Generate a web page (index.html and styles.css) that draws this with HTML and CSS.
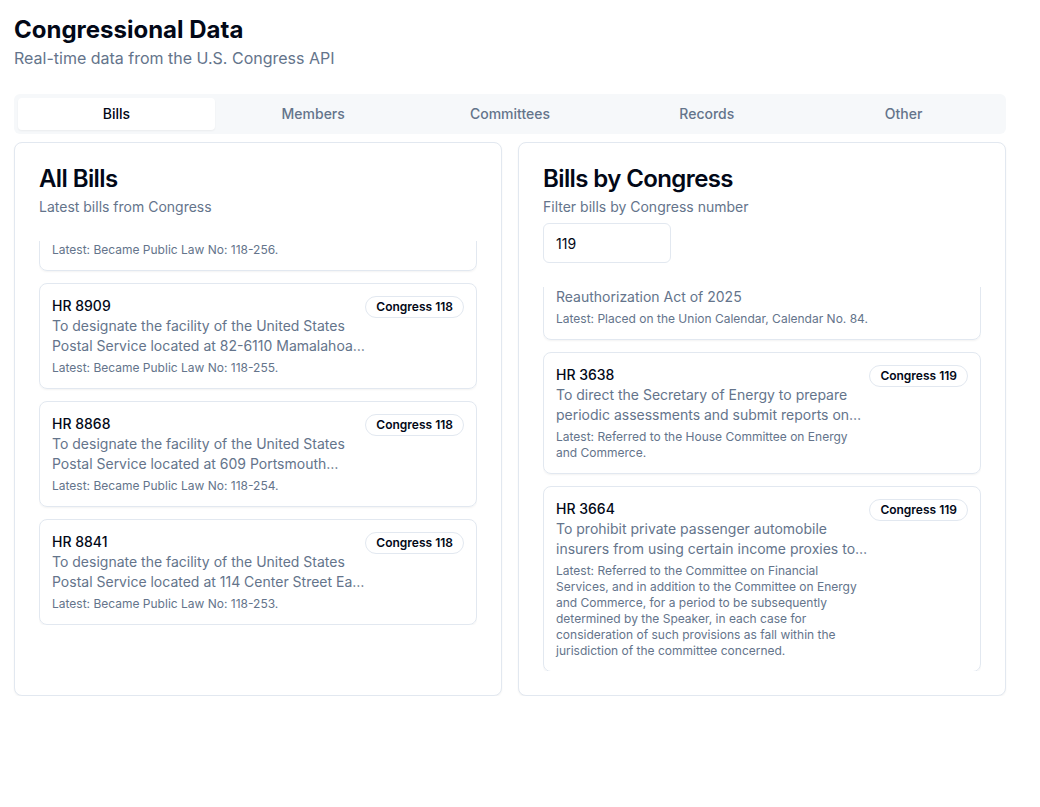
FILE: index.html
```html
<!DOCTYPE html>
<html lang="en">
<head>
<meta charset="utf-8">
<title>Congressional Data</title>
<link rel="stylesheet" href="styles.css">
</head>
<body>
<main class="page">
  <header class="page-header">
    <h1 class="page-title">Congressional Data</h1>
    <p class="page-sub">Real-time data from the U.S. Congress API</p>
  </header>

  <nav class="tabs">
    <div class="tab active">Bills</div>
    <div class="tab">Members</div>
    <div class="tab">Committees</div>
    <div class="tab">Records</div>
    <div class="tab">Other</div>
  </nav>

  <section class="grid">
    <div class="card">
      <div class="card-header">
        <h2 class="card-title">All Bills</h2>
        <p class="card-desc">Latest bills from Congress</p>
      </div>
      <div class="card-content">
        <div class="scroll scroll-bottom">
          <div class="list">
            <div class="bill">
              <div class="bill-main">
                <div class="bill-id">HR 8923</div>
                <div class="bill-title">To designate the facility of the United States Postal Service located at 5 Main Street in Hilo, Hawaii</div>
                <div class="bill-latest">Latest: Became Public Law No: 118-256.</div>
              </div>
              <span class="badge">Congress 118</span>
            </div>
            <div class="bill">
              <div class="bill-main">
                <div class="bill-id">HR 8909</div>
                <div class="bill-title">To designate the facility of the United States Postal Service located at 82-6110 Mamalahoa Highway in Captain Cook, Hawaii</div>
                <div class="bill-latest">Latest: Became Public Law No: 118-255.</div>
              </div>
              <span class="badge">Congress 118</span>
            </div>
            <div class="bill">
              <div class="bill-main">
                <div class="bill-id">HR 8868</div>
                <div class="bill-title">To designate the facility of the United States Postal Service located at 609 Portsmouth Avenue in Greenland, New Hampshire</div>
                <div class="bill-latest">Latest: Became Public Law No: 118-254.</div>
              </div>
              <span class="badge">Congress 118</span>
            </div>
            <div class="bill">
              <div class="bill-main">
                <div class="bill-id">HR 8841</div>
                <div class="bill-title">To designate the facility of the United States Postal Service located at 114 Center Street East in Roundup, Montana</div>
                <div class="bill-latest">Latest: Became Public Law No: 118-253.</div>
              </div>
              <span class="badge">Congress 118</span>
            </div>
          </div>
        </div>
      </div>
    </div>

    <div class="card">
      <div class="card-header">
        <h2 class="card-title">Bills by Congress</h2>
        <p class="card-desc">Filter bills by Congress number</p>
        <input class="input" type="text" value="119">
      </div>
      <div class="card-content">
        <div class="scroll">
          <div class="list list-offset">
            <div class="bill">
              <div class="bill-main">
                <div class="bill-id">HR 3593</div>
                <div class="bill-title">To reauthorize the Coast Guard Authorization Reauthorization Act of 2025</div>
                <div class="bill-latest">Latest: Placed on the Union Calendar, Calendar No. 84.</div>
              </div>
              <span class="badge">Congress 119</span>
            </div>
            <div class="bill">
              <div class="bill-main">
                <div class="bill-id">HR 3638</div>
                <div class="bill-title">To direct the Secretary of Energy to prepare periodic assessments and submit reports on the electric grid</div>
                <div class="bill-latest">Latest: Referred to the House Committee on Energy and Commerce.</div>
              </div>
              <span class="badge">Congress 119</span>
            </div>
            <div class="bill">
              <div class="bill-main">
                <div class="bill-id">HR 3664</div>
                <div class="bill-title">To prohibit private passenger automobile insurers from using certain income proxies to determine rates</div>
                <div class="bill-latest">Latest: Referred to the Committee on Financial Services, and in addition to the Committee on Energy and Commerce, for a period to be subsequently determined by the Speaker, in each case for consideration of such provisions as fall within the jurisdiction of the committee concerned.</div>
              </div>
              <span class="badge">Congress 119</span>
            </div>
          </div>
        </div>
      </div>
    </div>
  </section>
</main>
</body>
</html>
```

FILE: styles.css
```css
* { box-sizing: border-box; }

html, body {
  margin: 0;
  padding: 0;
  background: #ffffff;
}

body {
  font-family: Inter, "Noto Sans", "Liberation Sans", sans-serif;
  color: #020817;
}

.page {
  width: 992px;
  margin: 0 0 0 14px;
  padding-top: 14px;
}

.page-title {
  margin: 0;
  font-size: 24px;
  line-height: 32px;
  font-weight: 700;
}

.page-sub {
  margin: 0;
  font-size: 16px;
  line-height: 24px;
  color: #64748b;
}

.tabs {
  margin-top: 24px;
  height: 40px;
  padding: 4px;
  border-radius: 6px;
  background: #f6f8fa;
  display: grid;
  grid-template-columns: repeat(5, 1fr);
}

.tab {
  display: flex;
  align-items: center;
  justify-content: center;
  border-radius: 4px;
  font-size: 14px;
  line-height: 20px;
  font-weight: 500;
  color: #64748b;
}

.tab.active {
  background: #ffffff;
  color: #020817;
  box-shadow: 0 1px 2px rgba(0, 0, 0, 0.05);
}

.grid {
  margin-top: 8px;
  display: grid;
  grid-template-columns: 1fr 1fr;
  gap: 16px;
}

.card {
  border: 1px solid #e2e8f0;
  border-radius: 8px;
  background: #ffffff;
  box-shadow: 0 1px 2px rgba(0, 0, 0, 0.05);
}

.card-header {
  padding: 24px;
  display: flex;
  flex-direction: column;
  gap: 6px;
}

.card-title {
  margin: 0;
  font-size: 24px;
  line-height: 24px;
  font-weight: 600;
  letter-spacing: -0.6px;
}

.card-desc {
  margin: 0;
  font-size: 14px;
  line-height: 20px;
  color: #64748b;
}

.input {
  width: 128px;
  height: 40px;
  border: 1px solid #e2e8f0;
  border-radius: 6px;
  padding: 0 12px;
  font-family: inherit;
  font-size: 14px;
  color: #020817;
  background: #ffffff;
  outline: none;
}

.card-content {
  padding: 0 24px 24px;
}

.scroll {
  height: 384px;
  overflow: hidden;
  display: flex;
  flex-direction: column;
}

.scroll-bottom {
  justify-content: flex-end;
}

.list {
  display: flex;
  flex-direction: column;
  gap: 12px;
  flex-shrink: 0;
}

.list-offset {
  margin-top: -53px;
}

.bill {
  border: 1px solid #e2e8f0;
  border-radius: 8px;
  padding: 12px;
  display: flex;
  justify-content: space-between;
  align-items: flex-start;
  gap: 0;
  box-shadow: 0 1px 2px rgba(0, 0, 0, 0.05);
}

.bill-main {
  flex: 1;
  min-width: 0;
}

.bill-id {
  font-size: 14px;
  line-height: 20px;
  font-weight: 500;
  color: #020817;
}

.bill-title {
  font-size: 14px;
  line-height: 20px;
  color: #64748b;
  display: -webkit-box;
  -webkit-line-clamp: 2;
  -webkit-box-orient: vertical;
  overflow: hidden;
}

.bill-latest {
  margin-top: 4px;
  font-size: 12px;
  line-height: 16px;
  color: #64748b;
}

.badge {
  flex-shrink: 0;
  border: 1px solid #e2e8f0;
  border-radius: 999px;
  padding: 2px 10px;
  font-size: 12px;
  line-height: 16px;
  font-weight: 600;
  color: #020817;
}
```
